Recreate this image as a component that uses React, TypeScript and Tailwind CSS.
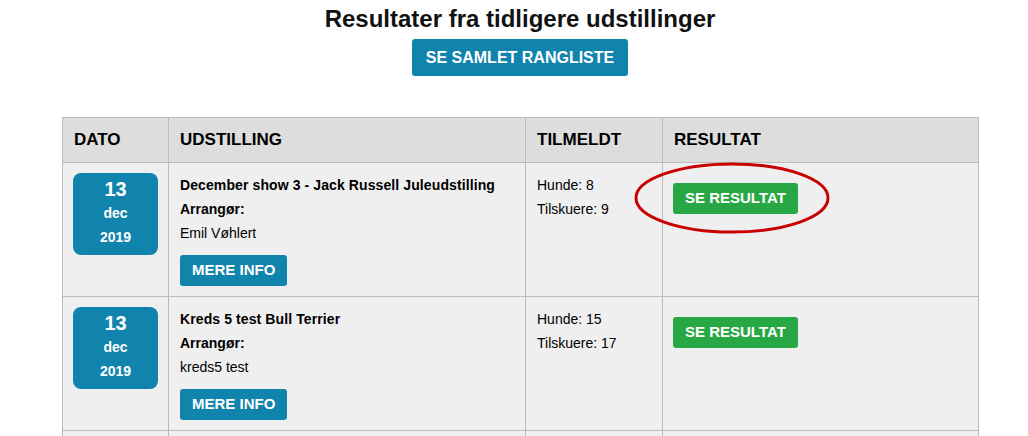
const shows = [
  {
    day: "13",
    month: "dec",
    year: "2019",
    title: "December show 3 - Jack Russell Juleudstilling",
    organizer: "Emil Vøhlert",
    dogs: 8,
    spectators: 9,
    marked: true,
  },
  {
    day: "13",
    month: "dec",
    year: "2019",
    title: "Kreds 5 test Bull Terrier",
    organizer: "kreds5 test",
    dogs: 15,
    spectators: 17,
    marked: false,
  },
];

const App = () => {
  return (
    <div className="min-h-screen bg-white text-black font-['Liberation_Sans',Arial,sans-serif]">
      <div className="ml-[62px] w-[916px]">
        <h1 className="pt-[5px] text-center text-[24px] font-bold leading-[27px] text-[#111]">
          Resultater fra tidligere udstillinger
        </h1>
        <div className="mt-[7px] flex justify-center">
          <button className="h-[37px] rounded-[3px] bg-[#1184ad] px-[14px] text-[16px] font-bold text-white">
            SE SAMLET RANGLISTE
          </button>
        </div>

        <table className="mt-[41px] w-[916px] table-fixed border-collapse">
          <colgroup>
            <col className="w-[106px]" />
            <col className="w-[357px]" />
            <col className="w-[137px]" />
            <col className="w-[316px]" />
          </colgroup>
          <thead>
            <tr className="h-[45px] bg-[#dddddd] text-left text-[17px] font-bold">
              <th className="border border-[#bbbbbb] pl-[11px]">DATO</th>
              <th className="border border-[#bbbbbb] pl-[11px]">UDSTILLING</th>
              <th className="border border-[#bbbbbb] pl-[11px]">TILMELDT</th>
              <th className="border border-[#bbbbbb] pl-[11px]">RESULTAT</th>
            </tr>
          </thead>
          <tbody>
            {shows.map((show, i) => (
              <tr key={i} className="bg-[#efefef] align-top text-[14px]">
                <td className="border border-[#bbbbbb] px-[10px] pt-[10px] pb-[10px]">
                  <div className="flex h-[82px] w-[85px] flex-col items-center rounded-[8px] bg-[#1184ad] pt-[4px] font-bold text-white leading-[24px]">
                    <span className="text-[20px]">{show.day}</span>
                    <span className="text-[14px]">{show.month}</span>
                    <span className="text-[14px]">{show.year}</span>
                  </div>
                </td>
                <td className="border border-[#bbbbbb] pl-[11px] pt-[10px] pb-[10px]">
                  <div className="leading-[24px]">
                    <div className="font-bold tracking-[0.1px]">{show.title}</div>
                    <div className="font-bold">Arrangør:</div>
                    <div>{show.organizer}</div>
                  </div>
                  <button className="mt-[10px] h-[31px] rounded-[3px] bg-[#1184ad] px-[12px] text-[15px] font-bold text-white">
                    MERE INFO
                  </button>
                </td>
                <td className="border border-[#bbbbbb] pl-[11px] pt-[10px] leading-[24px]">
                  <div>Hunde: {show.dogs}</div>
                  <div>Tilskuere: {show.spectators}</div>
                </td>
                <td className="border border-[#bbbbbb] pl-[10px] pt-[20px]">
                  <div className="relative inline-block">
                    <button className="h-[31px] rounded-[3px] bg-[#28a745] px-[12px] text-[15px] font-bold text-white">
                      SE RESULTAT
                    </button>
                    {show.marked && (
                      <svg
                        className="pointer-events-none absolute left-[-39px] top-[-22px]"
                        width="200"
                        height="76"
                        viewBox="0 0 200 76"
                      >
                        <ellipse
                          cx="98"
                          cy="37"
                          rx="96"
                          ry="34"
                          fill="none"
                          stroke="#c80000"
                          strokeWidth="3"
                        />
                      </svg>
                    )}
                  </div>
                </td>
              </tr>
            ))}
            <tr className="h-[40px] bg-[#efefef]">
              <td className="border border-[#bbbbbb]" />
              <td className="border border-[#bbbbbb]" />
              <td className="border border-[#bbbbbb]" />
              <td className="border border-[#bbbbbb]" />
            </tr>
          </tbody>
        </table>
      </div>
    </div>
  );
};

export default App;
